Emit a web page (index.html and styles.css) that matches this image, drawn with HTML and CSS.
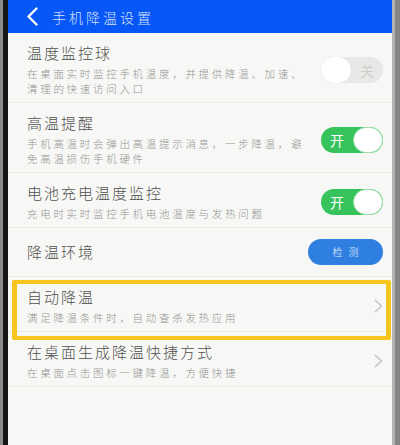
FILE: index.html
```html
<!DOCTYPE html>
<html lang="zh-CN">
<head>
<meta charset="utf-8">
<title>手机降温设置</title>
<link rel="stylesheet" href="styles.css">
</head>
<body>
<div class="device">
  <div class="frame-left"></div>
  <div class="screen">
    <div class="header">
      <svg class="back" width="12" height="19" viewBox="0 0 12 19"><path d="M10.5 1.5 L2.5 9.5 L10.5 17.5" fill="none" stroke="#ffffff" stroke-width="2.4" stroke-linecap="round" stroke-linejoin="round"/></svg>
      <span class="header-title">手机降温设置</span>
    </div>

    <div class="row">
      <div class="text">
        <div class="title">温度监控球</div>
        <div class="desc">在桌面实时监控手机温度，并提供降温、加速、清理的快速访问入口</div>
      </div>
      <div class="toggle off"><span class="knob"></span><span class="label">关</span></div>
    </div>

    <div class="row">
      <div class="text">
        <div class="title">高温提醒</div>
        <div class="desc">手机高温时会弹出高温提示消息，一步降温，避免高温损伤手机硬件</div>
      </div>
      <div class="toggle on"><span class="label">开</span><span class="knob"></span></div>
    </div>

    <div class="row">
      <div class="text">
        <div class="title">电池充电温度监控</div>
        <div class="desc">充电时实时监控手机电池温度与发热问题</div>
      </div>
      <div class="toggle on"><span class="label">开</span><span class="knob"></span></div>
    </div>

    <div class="row row-simple">
      <div class="text">
        <div class="title">降温环境</div>
      </div>
      <div class="btn">检测</div>
    </div>

    <div class="row row-mark">
      <div class="text">
        <div class="title">自动降温</div>
        <div class="desc">满足降温条件时，自动查杀发热应用</div>
      </div>
      <svg class="chev" width="9" height="14" viewBox="0 0 9 14"><path d="M1 1 L7.5 7 L1 13" fill="none" stroke="#c2c2c2" stroke-width="1.4"/></svg>
      <div class="highlight"></div>
    </div>

    <div class="row">
      <div class="text">
        <div class="title">在桌面生成降温快捷方式</div>
        <div class="desc">在桌面点击图标一键降温，方便快捷</div>
      </div>
      <svg class="chev" width="9" height="14" viewBox="0 0 9 14"><path d="M1 1 L7.5 7 L1 13" fill="none" stroke="#c2c2c2" stroke-width="1.4"/></svg>
    </div>
  </div>
  <div class="frame-right"></div>
</div>
</body>
</html>
```

FILE: styles.css
```css
html, body {
  margin: 0;
  padding: 0;
}
body {
  width: 400px;
  height: 445px;
  overflow: hidden;
  font-family: "Noto Sans CJK SC", "Noto Sans", sans-serif;
}
.device {
  display: flex;
  width: 400px;
  height: 445px;
}
.frame-left {
  width: 8px;
  background: linear-gradient(to right, #8c8c8c 0, #8c8c8c 3px, #161616 3px, #161616 100%);
}
.frame-right {
  width: 8px;
  background: linear-gradient(to right, #b2b2b2 0, #b2b2b2 3px, #858585 3px, #858585 100%);
}
.screen {
  width: 384px;
  height: 445px;
  background: #f7f8f5;
  display: flex;
  flex-direction: column;
}
.header {
  height: 33px;
  flex: none;
  background: #0657f5;
  display: flex;
  align-items: center;
  padding-left: 18px;
}
.back {
  display: block;
}
.header-title {
  margin-left: 14px;
  font-size: 14px;
  font-weight: 300;
  letter-spacing: 3px;
  color: #d6e2ff;
  line-height: 20px;
}
.row {
  display: flex;
  align-items: center;
  padding: 10px 9px 6px 19px;
  border-bottom: 1px solid #ebebe8;
  flex: none;
}
.text {
  flex: 1;
  min-width: 0;
}
.title {
  font-size: 15px;
  font-weight: 300;
  line-height: 20px;
  letter-spacing: 2px;
  color: #505050;
}
.desc {
  margin-top: 3px;
  width: 280px;
  font-size: 10.5px;
  font-weight: 300;
  line-height: 15px;
  letter-spacing: 2.7px;
  color: #939393;
}
.row-simple {
  height: 48px;
  padding-top: 0;
  padding-bottom: 0;
}
.row-mark {
  position: relative;
}
.highlight {
  position: absolute;
  left: 4px;
  right: 1px;
  top: 3px;
  height: 60px;
  box-sizing: border-box;
  border: 4px solid #f8c51f;
  border-left-width: 5px;
  border-right-width: 5px;
  border-radius: 2px;
  pointer-events: none;
}
.toggle {
  width: 62px;
  height: 26px;
  border-radius: 13px;
  display: flex;
  align-items: center;
  box-sizing: border-box;
  flex: none;
}
.toggle .knob {
  width: 30px;
  height: 26px;
  border-radius: 13px;
  background: #ffffff;
  box-sizing: border-box;
}
.toggle .label {
  flex: 1;
  text-align: center;
  font-size: 14px;
  line-height: 26px;
}
.toggle.on {
  background: #37c35b;
}
.toggle.on .knob {
  border: 1px solid #9fe0ae;
}
.toggle.on .label {
  color: #ffffff;
}
.toggle.off {
  background: #e8e8e6;
}
.toggle.off .knob {
  box-shadow: 0 0 1px rgba(0, 0, 0, 0.15);
}
.toggle.off .label {
  color: #c6c6c4;
  font-weight: 300;
}
.btn {
  width: 75px;
  height: 26px;
  border-radius: 13px;
  background: #2f7fe0;
  color: #e8f1ff;
  font-size: 10px;
  font-weight: 300;
  letter-spacing: 6px;
  text-indent: 6px;
  line-height: 26px;
  text-align: center;
  flex: none;
}
.chev {
  display: block;
  flex: none;
}
```
